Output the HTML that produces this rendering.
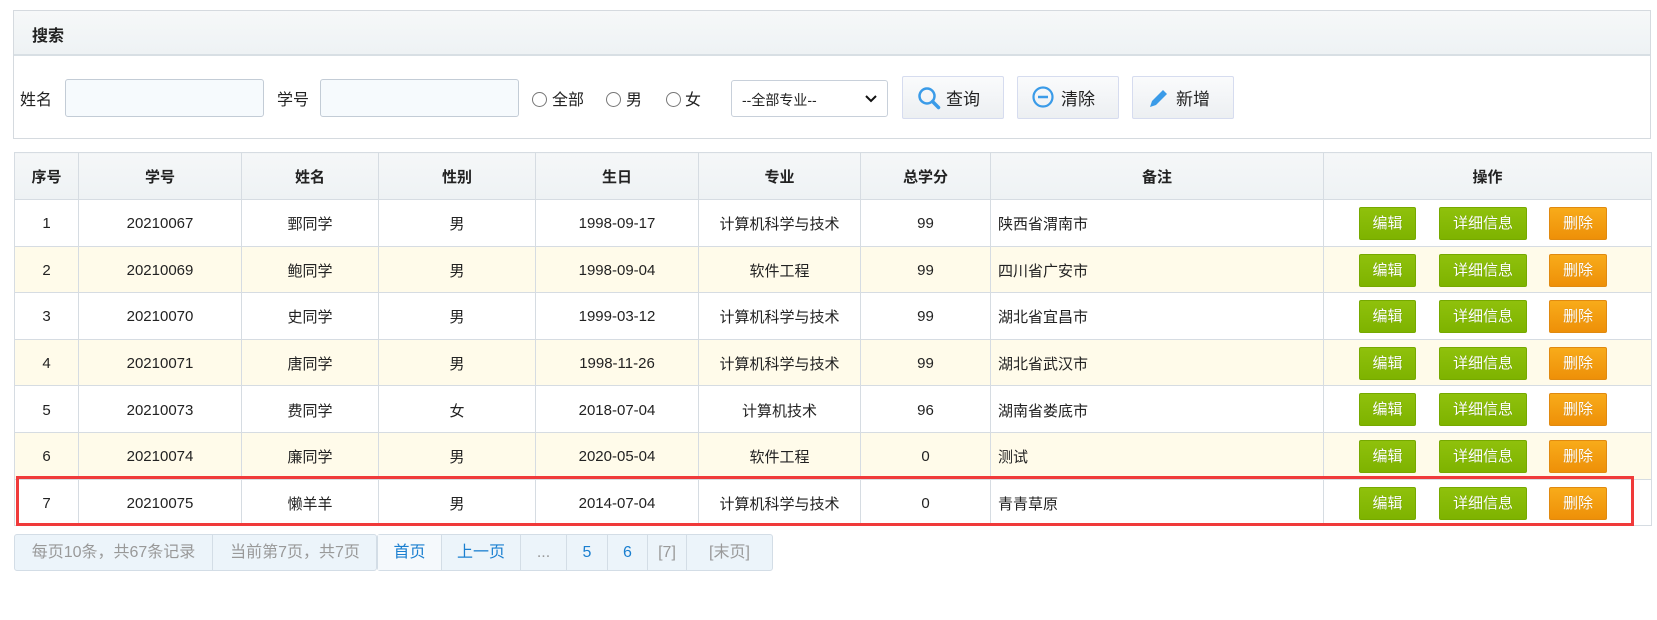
<!DOCTYPE html>
<html><head><meta charset="utf-8">
<style>
*{box-sizing:border-box;margin:0;padding:0}
body{width:1657px;height:620px;background:#fff;font-family:"Liberation Sans","Noto Sans CJK SC",sans-serif;color:#222;position:relative;overflow:hidden;font-size:15px}
.abs{position:absolute}
.panel{left:13px;top:10px;width:1638px;height:129px;border:1px solid #d5dadf}
.phead{left:0;top:0;right:0;height:45px;background:linear-gradient(#f6f8f9,#eef2f4);border-bottom:2px solid #d8dfe4}
.phead span{position:absolute;left:18px;top:11px;font-weight:bold;font-size:16px}
.lbl{font-size:16px;top:86px}
.inp{top:79px;height:38px;border:1px solid #c3ccd6;border-radius:3px;background:#f6fafd}
.radio{top:92px;width:15px;height:15px;border:1px solid #777;border-radius:50%;background:#fff}
.sel{left:731px;top:80px;width:157px;height:37px;border:1px solid #c8d0da;border-radius:3px;background:#fff;font-size:14px;padding:9px 0 0 10px}
.btn{top:76px;height:43px;width:102px;border:1px solid #d6dcef;border-radius:2px;background:linear-gradient(#fafbfc,#eceff2);font-size:17px}
.btn svg{position:absolute;left:14px;top:9px}
.btn span{position:absolute;left:43px;top:8px}
table{position:absolute;left:14px;top:152px;border-collapse:collapse;table-layout:fixed;width:1637px}
td,th{border:1px solid #d6dce2;text-align:center;font-size:15px;padding:0}
th{height:47px;background:linear-gradient(#f5f7f8,#eef2f4);font-weight:bold}
td{height:46.6px;padding-top:2px}
tr.o td{background:#fffbea}
td.l{text-align:left;padding-left:7px}
.b{display:inline-block;height:33px;line-height:31px;color:#fff;font-size:15px;border-radius:2px;vertical-align:middle;text-shadow:0 0 1px rgba(0,0,0,.2)}
.g{background:linear-gradient(#8fc10c,#7eb300);border:1px solid #76a900}
.r{background:linear-gradient(#f8ab1a,#ee9008);border:1px solid #e08a10}
.red{left:16px;top:476px;width:1618px;height:50px;border:3px solid #f03a3a}
.pg{top:534px;height:37px;border:1px solid #d3dde6;border-radius:3px;background:#ecf4fa;font-size:16px}
.pg div{position:absolute;top:0;height:35px;line-height:35px;text-align:center;border-right:1px solid #d3dde6}
</style></head><body>
<div class="abs panel"><div class="abs phead"><span>搜索</span></div></div>
<div class="abs lbl" style="left:20px">姓名</div>
<div class="abs inp" style="left:65px;width:199px"></div>
<div class="abs lbl" style="left:277px">学号</div>
<div class="abs inp" style="left:320px;width:199px"></div>
<div class="abs radio" style="left:532px"></div><div class="abs lbl" style="left:552px">全部</div>
<div class="abs radio" style="left:606px"></div><div class="abs lbl" style="left:626px">男</div>
<div class="abs radio" style="left:666px"></div><div class="abs lbl" style="left:685px">女</div>
<div class="abs sel">--全部专业--<svg class="abs" style="right:10px;top:14px" width="12" height="8"><path d="M1 1l5 5 5-5" stroke="#111" stroke-width="2" fill="none"/></svg></div>
<div class="abs btn" style="left:902px"><svg width="24" height="24"><circle cx="10" cy="10" r="7.5" stroke="#3a9be8" stroke-width="2.5" fill="none"/><path d="M15.5 15.5l6 6" stroke="#3a9be8" stroke-width="3.5" stroke-linecap="round"/></svg><span>查询</span></div>
<div class="abs btn" style="left:1017px"><svg width="24" height="24"><circle cx="11" cy="11" r="9.5" stroke="#3a9be8" stroke-width="2.2" fill="none"/><path d="M6 11h10" stroke="#3a9be8" stroke-width="2.5"/></svg><span>清除</span></div>
<div class="abs btn" style="left:1132px"><svg width="24" height="24"><path d="M3 21l2-6 11-11 4 4-11 11z" fill="#3a9be8"/></svg><span>新增</span></div>
<table>
<colgroup><col style="width:64px"><col style="width:163px"><col style="width:137px"><col style="width:157px"><col style="width:163px"><col style="width:162px"><col style="width:130px"><col style="width:333px"><col style="width:328px"></colgroup>
<tr><th>序号</th><th>学号</th><th>姓名</th><th>性别</th><th>生日</th><th>专业</th><th>总学分</th><th>备注</th><th>操作</th></tr>
<tr><td>1</td><td>20210067</td><td>鄄同学</td><td>男</td><td>1998-09-17</td><td>计算机科学与技术</td><td>99</td><td class="l">陕西省渭南市</td><td class="ops"></td></tr>
<tr class="o"><td>2</td><td>20210069</td><td>鲍同学</td><td>男</td><td>1998-09-04</td><td>软件工程</td><td>99</td><td class="l">四川省广安市</td><td class="ops"></td></tr>
<tr><td>3</td><td>20210070</td><td>史同学</td><td>男</td><td>1999-03-12</td><td>计算机科学与技术</td><td>99</td><td class="l">湖北省宜昌市</td><td class="ops"></td></tr>
<tr class="o"><td>4</td><td>20210071</td><td>唐同学</td><td>男</td><td>1998-11-26</td><td>计算机科学与技术</td><td>99</td><td class="l">湖北省武汉市</td><td class="ops"></td></tr>
<tr><td>5</td><td>20210073</td><td>费同学</td><td>女</td><td>2018-07-04</td><td>计算机技术</td><td>96</td><td class="l">湖南省娄底市</td><td class="ops"></td></tr>
<tr class="o"><td>6</td><td>20210074</td><td>廉同学</td><td>男</td><td>2020-05-04</td><td>软件工程</td><td>0</td><td class="l">测试</td><td class="ops"></td></tr>
<tr><td>7</td><td>20210075</td><td>懒羊羊</td><td>男</td><td>2014-07-04</td><td>计算机科学与技术</td><td>0</td><td class="l">青青草原</td><td class="ops"></td></tr>
</table>
<div class="abs red"></div>
<div class="abs pg" style="left:14px;width:363px;color:#999">
<div style="left:0;width:198px">每页10条，共67条记录</div><div style="left:198px;width:164px;border:none">当前第7页，共7页</div></div>
<div class="abs pg" style="left:377px;width:396px;color:#1a7fd0">
<div style="left:0;width:64px;background:#f5f9fc">首页</div><div style="left:64px;width:79px">上一页</div><div style="left:143px;width:46px;color:#999">...</div><div style="left:189px;width:41px">5</div><div style="left:230px;width:40px">6</div><div style="left:270px;width:39px;color:#999">[7]</div><div style="left:309px;width:85px;color:#999;border:none">[末页]</div></div>
<script>
document.querySelectorAll('td.ops').forEach(function(td){
td.style.position='relative';
td.innerHTML='<span class="b g" style="position:absolute;left:35px;top:7px;width:57px;text-align:center">编辑</span><span class="b g" style="position:absolute;left:115px;top:7px;width:88px;text-align:center">详细信息</span><span class="b r" style="position:absolute;left:225px;top:7px;width:58px;text-align:center">删除</span>';
});
</script>
</body></html>
